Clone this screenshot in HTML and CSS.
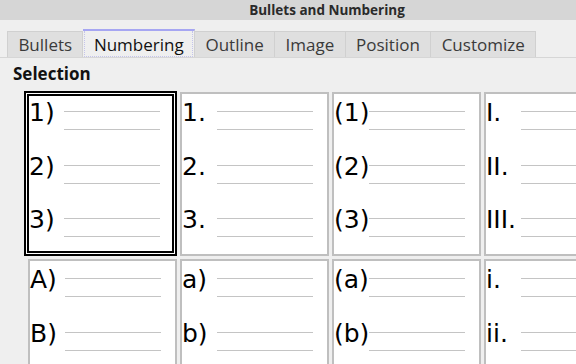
FILE: index.html
```html
<!DOCTYPE html>
<html lang="en">
<head>
    <meta charset="UTF-8">
    <title>Bullets and Numbering</title>
    <link rel="stylesheet" href="styles.css">
</head>
<body>
    <div class="titlebar">Bullets and Numbering</div>
    <div class="tabbar">
        <div class="tab">Bullets</div>
        <div class="tab active"><span class="focus">Numbering</span></div>
        <div class="tab">Outline</div>
        <div class="tab">Image</div>
        <div class="tab">Position</div>
        <div class="tab">Customize</div>
    </div>
    <div class="page">
        <div class="section">Selection</div>
        <div class="valueset">
            <!-- row 1 -->
            <div class="cell selected">
                <div class="item"><span class="num">1)</span><div class="lines"><i></i><i></i></div></div>
                <div class="item"><span class="num">2)</span><div class="lines"><i></i><i></i></div></div>
                <div class="item"><span class="num">3)</span><div class="lines"><i></i><i></i></div></div>
            </div>
            <div class="cell">
                <div class="item"><span class="num">1.</span><div class="lines"><i></i><i></i></div></div>
                <div class="item"><span class="num">2.</span><div class="lines"><i></i><i></i></div></div>
                <div class="item"><span class="num">3.</span><div class="lines"><i></i><i></i></div></div>
            </div>
            <div class="cell">
                <div class="item"><span class="num">(1)</span><div class="lines"><i></i><i></i></div></div>
                <div class="item"><span class="num">(2)</span><div class="lines"><i></i><i></i></div></div>
                <div class="item"><span class="num">(3)</span><div class="lines"><i></i><i></i></div></div>
            </div>
            <div class="cell">
                <div class="item"><span class="num">I.</span><div class="lines"><i></i><i></i></div></div>
                <div class="item"><span class="num">II.</span><div class="lines"><i></i><i></i></div></div>
                <div class="item"><span class="num">III.</span><div class="lines"><i></i><i></i></div></div>
            </div>
            <!-- row 2, only the part that fits in the window -->
            <div class="cell">
                <div class="item"><span class="num">A)</span><div class="lines"><i></i><i></i></div></div>
                <div class="item"><span class="num">B)</span><div class="lines"><i></i><i></i></div></div>
            </div>
            <div class="cell">
                <div class="item"><span class="num">a)</span><div class="lines"><i></i><i></i></div></div>
                <div class="item"><span class="num">b)</span><div class="lines"><i></i><i></i></div></div>
            </div>
            <div class="cell">
                <div class="item"><span class="num">(a)</span><div class="lines"><i></i><i></i></div></div>
                <div class="item"><span class="num">(b)</span><div class="lines"><i></i><i></i></div></div>
            </div>
            <div class="cell">
                <div class="item"><span class="num">i.</span><div class="lines"><i></i><i></i></div></div>
                <div class="item"><span class="num">ii.</span><div class="lines"><i></i><i></i></div></div>
            </div>
        </div>
    </div>
</body>
</html>
```

FILE: styles.css
```css
* {
    box-sizing: border-box;
}
body {
    margin: 0;
    width: 576px;
    height: 364px;
    overflow: hidden;
    background: #efefef;
    font-family: 'Open Sans', sans-serif;
    color: #222;
}
.titlebar {
    height: 20px;
    padding-left: 78px;
    background: #d6d6d6;
    text-align: center;
    font-size: 13.5px;
    font-weight: bold;
    line-height: 20px;
    color: #2a2a2a;
}
.tabbar {
    display: flex;
    align-items: flex-end;
    height: 38px;
    padding: 0 7px;
    border-bottom: 1px solid #d6d6d6;
}
.tab {
    height: 26px;
    padding: 1px 10.4px 0;
    background: #dfdfdf;
    border: 1px solid #d0d0d0;
    border-bottom: none;
    border-left: none;
    font-size: 17px;
    line-height: 24px;
    color: #3a3a3a;
}
.tab:first-child {
    border-left: 1px solid #d0d0d0;
}
.tab.active {
    height: 28px;
    padding: 0 1px;
    background: #efefef;
    border-top: 2px solid #a6a6f2;
    color: #111;
}
.tab.active .focus {
    display: block;
    height: 26px;
    padding: 2px 8.4px 0;
    border: 1px dotted #c4c4ea;
    border-top: none;
}
.page {
    padding: 4px 13px;
}
.section {
    font-size: 17px;
    font-weight: bold;
    line-height: 24px;
    color: #111;
}
.valueset {
    display: grid;
    grid-template-columns: repeat(4, 149px);
    grid-auto-rows: 164px;
    gap: 3px;
    margin: 6px 0 0 15px;
}
.cell {
    padding-top: 4px;
    background: #fff;
    border: 2px solid #bfbfbf;
}
.cell.selected {
    margin: -1px 0 0 -4px;
    padding-top: 2px;
    border: 5px double #000;
}
.item {
    display: grid;
    height: 53.5px;
}
.num {
    grid-area: 1 / 1;
    font-family: 'DejaVu Sans', sans-serif;
    font-size: 25px;
    line-height: 30px;
    color: #000;
}
.lines {
    grid-area: 1 / 1;
    width: 96px;
    margin: 13px 0 0 35px;
}
.lines i {
    display: block;
    height: 1px;
    margin-bottom: 17px;
    background: #c4c4c4;
}
```
